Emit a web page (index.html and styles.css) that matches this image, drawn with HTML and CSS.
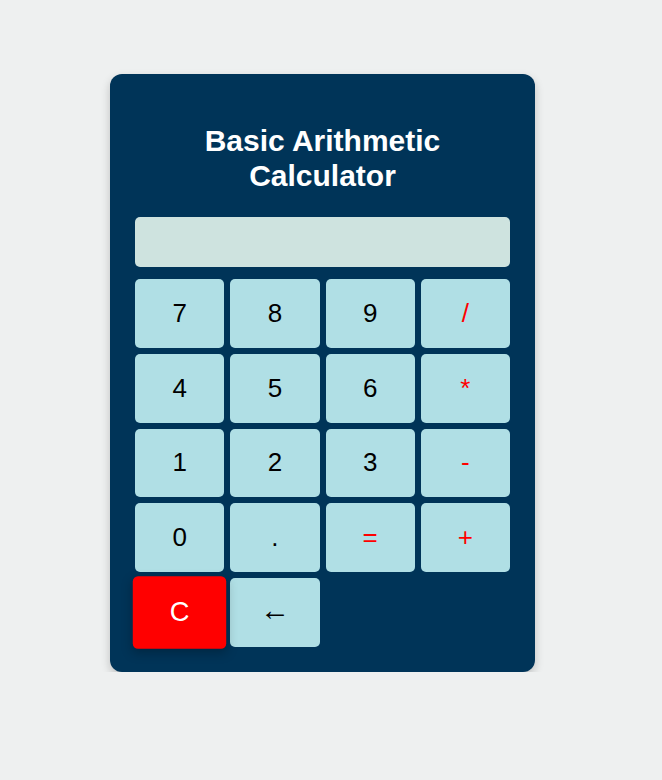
FILE: index.html
```html
<!DOCTYPE html>
<html lang="en">
<head>
<meta charset="utf-8">
<title>Basic Arithmetic Calculator</title>
<link rel="stylesheet" href="styles.css">
</head>
<body>
<main class="page">
  <section class="calculator">
    <h1 class="title">Basic Arithmetic Calculator</h1>
    <div class="display"></div>
    <div class="keys">
      <button class="key">7</button>
      <button class="key">8</button>
      <button class="key">9</button>
      <button class="key op">/</button>
      <button class="key">4</button>
      <button class="key">5</button>
      <button class="key">6</button>
      <button class="key op">*</button>
      <button class="key">1</button>
      <button class="key">2</button>
      <button class="key">3</button>
      <button class="key op">-</button>
      <button class="key">0</button>
      <button class="key">.</button>
      <button class="key op">=</button>
      <button class="key op">+</button>
      <button class="key clear">C</button>
      <button class="key back">&larr;</button>
    </div>
  </section>
</main>
</body>
</html>
```

FILE: styles.css
```css
html, body {
  margin: 0;
  padding: 0;
  background: #eef0f0;
  font-family: "Liberation Sans", Arial, sans-serif;
}

.page {
  padding: 74px 0 0 110px;
}

.calculator {
  width: 375px;
  padding: 25px;
  background: #003458;
  border-radius: 12px;
  box-shadow: 0 4px 10px rgba(0, 0, 0, 0.2);
}

.title {
  margin: 25px 0 24px;
  color: #ffffff;
  font-size: 30px;
  font-weight: bold;
  text-align: center;
  line-height: 1.15;
}

.display {
  height: 50px;
  background: #cee3df;
  border-radius: 5px;
  margin-bottom: 12px;
}

.keys {
  display: grid;
  grid-template-columns: repeat(4, 1fr);
  grid-auto-rows: 68.8px;
  gap: 6px;
}

.key {
  border: none;
  border-radius: 5px;
  background: #b0dfe5;
  color: #000000;
  font-family: "Liberation Sans", Arial, sans-serif;
  font-size: 26px;
  padding: 0;
  cursor: pointer;
}

.op {
  color: #ff0000;
}

.clear {
  background: #ff0000;
  color: #ffffff;
  transform: scale(1.05);
  box-shadow: 0 4px 10px rgba(0, 0, 0, 0.25);
}

.back {
  font-size: 30px;
  padding-bottom: 6px;
}
```
